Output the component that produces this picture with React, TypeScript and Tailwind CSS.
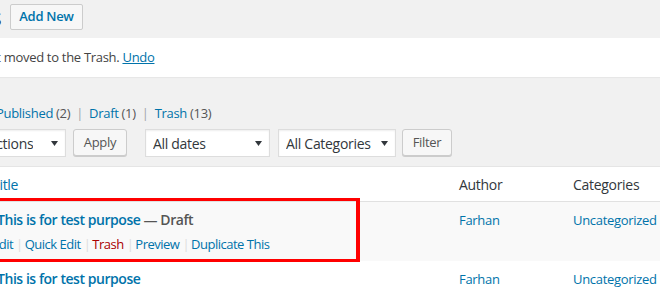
import React from "react";

const font = { fontFamily: '"Open Sans", "Noto Sans", sans-serif' };

function Caret() {
  return (
    <svg width="7" height="5" viewBox="0 0 7 5" className="shrink-0">
      <path d="M0 0h7L3.5 5z" fill="#32373c" />
    </svg>
  );
}

function Select({ label, width }: { label: string; width: string }) {
  return (
    <div
      className={`${width} h-[28px] flex items-center justify-between bg-white border border-[#ddd] shadow-[inset_0_1px_2px_rgba(0,0,0,0.07)] pl-[7px] pr-[7px] text-[14px] text-[#32373c] tracking-[-0.3px]`}
    >
      <span className="whitespace-nowrap overflow-hidden">{label}</span>
      <Caret />
    </div>
  );
}

function Button({ label, width }: { label: string; width: string }) {
  return (
    <button
      className={`${width} h-[27px] bg-[#f7f7f7] border border-[#ccc] rounded-[3px] shadow-[0_1px_0_#ccc] text-[13px] text-[#555] tracking-[-0.3px]`}
    >
      {label}
    </button>
  );
}

const Sep = () => <span className="text-[#ddd] ml-[3px] mr-[2px]">|</span>;

export default function App() {
  const actions = [
    { t: "Edit", c: "text-[#0073aa]" },
    { t: "Quick Edit", c: "text-[#0073aa]" },
    { t: "Trash", c: "text-[#a00]" },
    { t: "Preview", c: "text-[#0073aa]" },
    { t: "Duplicate This", c: "text-[#0073aa]" },
  ];

  return (
    <div
      className="relative w-[660px] h-[295px] overflow-hidden bg-[#f1f1f1]"
      style={font}
    >
      <div className="ml-[-51px] w-[760px]">
        {/* heading */}
        <div className="mt-[4px] h-[26px] flex items-center">
          <h1 className="ml-[-4px] text-[23px] font-normal text-[#23282d] leading-none tracking-[-0.3px]">
            Posts
          </h1>
          <button className="ml-[9px] h-[26px] px-[8px] bg-[#f7f7f7] border border-[#ccc] rounded-[2px] text-[13px] font-semibold text-[#0073aa] tracking-[-0.3px]">
            Add New
          </button>
        </div>

        {/* notice */}
        <div className="mt-[8px] h-[39px] bg-white border-l-4 border-[#46b450] shadow-[0_1px_1px_rgba(0,0,0,0.04)] flex items-center pl-[12px] text-[13px] text-[#444] tracking-[-0.3px]">
          1 post moved to the Trash.&nbsp;
          <a className="text-[#0073aa] underline">Undo</a>
        </div>

        {/* subsubsub */}
        <div className="mt-[27px] ml-[-2px] h-[18px] leading-[18px] flex items-center text-[13px] text-[#0073aa] tracking-[-0.3px] whitespace-nowrap">
          <span className="text-[#000] font-semibold">All</span>
          <span className="text-[#555] ml-[3px]">(3)</span>
          <span className="text-[#a0a5aa] mx-[5px]">|</span>
          <span>Published</span>
          <span className="text-[#555] ml-[3px]">(2)</span>
          <span className="text-[#a0a5aa] mx-[6px]">|</span>
          <span>Draft</span>
          <span className="text-[#555] ml-[3px]">(1)</span>
          <span className="text-[#a0a5aa] mx-[6px]">|</span>
          <span>Trash</span>
          <span className="text-[#555] ml-[3px]">(13)</span>
        </div>

        {/* tablenav */}
        <div className="mt-[7px] h-[28px] flex items-start">
          <Select label="Bulk Actions" width="w-[117px]" />
          <div className="ml-[7px]">
            <Button label="Apply" width="w-[54px]" />
          </div>
          <div className="ml-[18px]">
            <Select label="All dates" width="w-[125px]" />
          </div>
          <div className="ml-[8px]">
            <Select label="All Categories" width="w-[118px]" />
          </div>
          <div className="ml-[6px]">
            <Button label="Filter" width="w-[50px]" />
          </div>
        </div>

        {/* table */}
        <div className="mt-[9px] border-t border-[#e5e5e5] tracking-[-0.3px]">
          <div className="grid grid-cols-[33px_467px_114px_1fr] h-[35px] bg-white border-b border-[#e1e1e1] items-center text-[14px] text-[#32373c]">
            <div />
            <div className="px-[10px] text-[#0073aa]">Title</div>
            <div className="px-[10px]">Author</div>
            <div className="px-[10px]">Categories</div>
          </div>

          <div className="grid grid-cols-[33px_467px_114px_1fr] h-[59px] bg-[#f9f9f9] text-[13px]">
            <div />
            <div className="px-[10px] pt-[8px]">
              <div className="pl-[5px] h-[20px] leading-[20px] text-[14px] font-semibold text-[#0073aa] tracking-[-0.45px]">
                This is for test purpose{" "}
                <span className="text-[#555]">— Draft</span>
              </div>
              <div className="mt-[4px] h-[20px] leading-[20px] flex whitespace-nowrap tracking-[-0.5px]">
                {actions.map((a, i) => (
                  <React.Fragment key={a.t}>
                    {i > 0 && <Sep />}
                    <span className={a.c}>{a.t}</span>
                  </React.Fragment>
                ))}
              </div>
            </div>
            <div className="px-[10px] pt-[8px] leading-[20px] text-[#0073aa]">
              Farhan
            </div>
            <div className="px-[10px] pt-[8px] leading-[20px] text-[#0073aa]">
              Uncategorized
            </div>
          </div>

          <div className="grid grid-cols-[33px_467px_114px_1fr] h-[59px] bg-white text-[13px]">
            <div />
            <div className="pl-[15px] pr-[10px] pt-[8px] h-[20px] leading-[20px] text-[14px] font-semibold text-[#0073aa] tracking-[-0.45px] box-content">
              This is for test purpose
            </div>
            <div className="px-[10px] pt-[8px] leading-[20px] text-[#0073aa]">
              Farhan
            </div>
            <div className="px-[10px] pt-[8px] leading-[20px] text-[#0073aa]">
              Uncategorized
            </div>
          </div>
        </div>
      </div>

      {/* annotation box */}
      <div className="absolute left-[-10px] top-[198px] w-[370px] h-[64px] border-[3px] border-r-4 border-[#ff0000] pointer-events-none" />
    </div>
  );
}
